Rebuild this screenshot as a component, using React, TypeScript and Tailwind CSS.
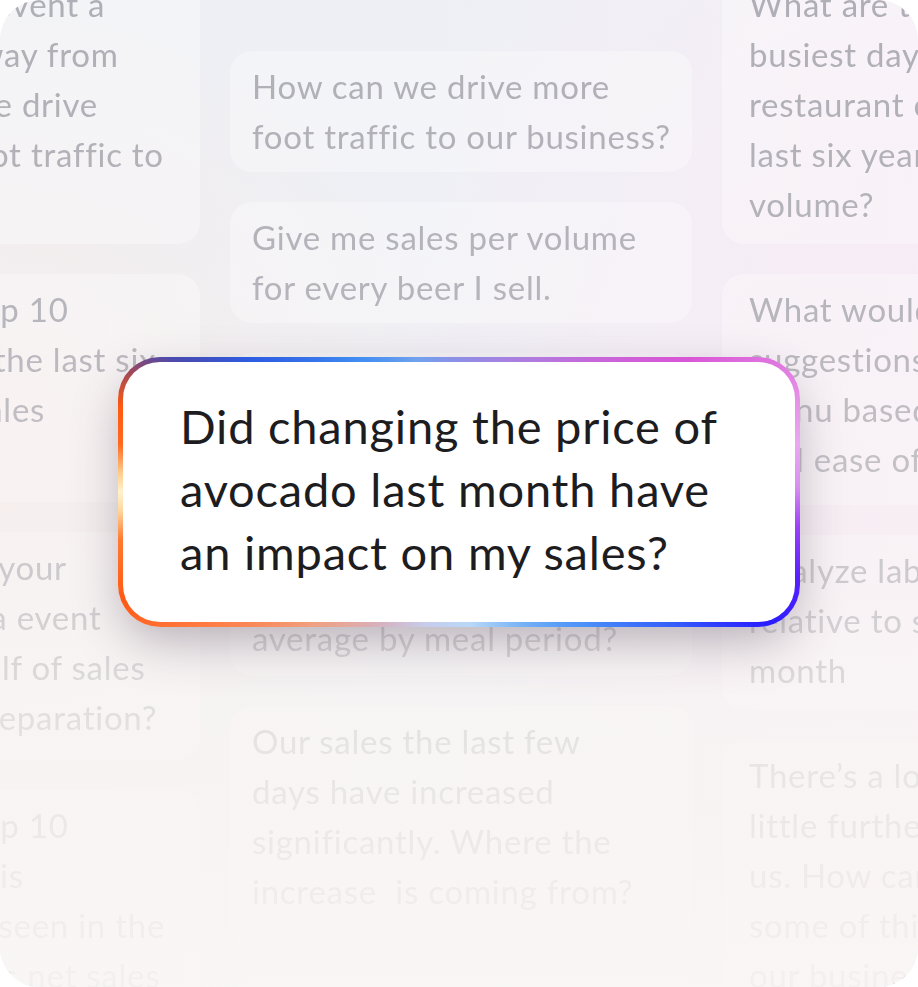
import React from 'react';

type Card = { lines: string[]; h: string };
type Column = { mt: string; pad: string; cards: Card[] };

// background prompt cards, three columns that run past the frame on both sides
const columns: Column[] = [
  {
    mt: 'mt-[-31px]',
    pad: 'px-[22px]',
    cards: [
      {
        h: 'h-[275px]',
        lines: ['If there is a big event a', 'couple block away from', 'us how could we drive', 'even greater foot traffic to', 'us?'],
      },
      {
        h: 'h-[228px]',
        lines: ['What are the top 10', 'selling items in the last six', 'month by net sales', 'volume?'],
      },
      {
        h: 'h-[228px]',
        lines: ['How can I prep your', 'staff ahead for a event', 'keep labor at half of sales', 'while in their preparation?'],
      },
      {
        h: 'h-[260px]',
        lines: ['What are the top 10', 'items and what is', 'the growth I’ve seen in the', 'previous month’s net sales'],
      },
    ],
  },
  {
    mt: 'mt-[51px]',
    pad: 'px-[22px]',
    cards: [
      { h: 'h-[121px]', lines: ['How can we drive more', 'foot traffic to our business?'] },
      { h: 'h-[121px]', lines: ['Give me sales per volume', 'for every beer I sell.'] },
      {
        h: 'h-[323px]',
        lines: [
          'What is my average check',
          'size by server and by',
          'day of the week? Also',
          'how does it compare to',
          'last year’s weekly',
          'average by meal period?',
        ],
      },
      {
        h: 'h-[240px]',
        lines: ['Our sales the last few', 'days have increased', 'significantly. Where the', 'increase  is coming from?'],
      },
      { h: 'h-[200px]', lines: ['Which menu items are', 'driving repeat visits?'] },
    ],
  },
  {
    mt: 'mt-[-31px]',
    pad: 'pl-[27px] pr-[22px]',
    cards: [
      {
        h: 'h-[275px]',
        lines: ['What are the', 'busiest days for my', 'restaurant over the', 'last six years by', 'volume?'],
      },
      {
        h: 'h-[231px]',
        lines: ['What would be your', 'suggestions for my', 'menu based on cost', 'and ease of prep?'],
      },
      { h: 'h-[175px]', lines: ['Analyze labor costs', 'relative to sales this', 'month'] },
      {
        h: 'h-[280px]',
        lines: [
          'There’s a lot going on a',
          'little further away from',
          'us. How can we capture',
          'some of this traffic for',
          'our business?',
        ],
      },
    ],
  },
];

const PromptCard = ({ card, pad }: { card: Card; pad: string }) => (
  <div className={`overflow-hidden rounded-[22px] bg-white/35 pt-[10px] ${pad} ${card.h}`}>
    {card.lines.map((line, i) => (
      <div key={i} className="whitespace-pre">
        {line}
      </div>
    ))}
  </div>
);

export default function App() {
  return (
    <div className="h-[987px] w-[918px] bg-white font-[Lato,sans-serif]">
      <div className="relative h-[987px] w-[918px] overflow-hidden rounded-[40px] bg-[radial-gradient(circle_at_0%_45%,rgba(246,236,234,0.9)_0%,rgba(246,236,234,0)_45%),radial-gradient(circle_at_100%_40%,rgba(246,234,246,0.9)_0%,rgba(246,234,246,0)_50%),linear-gradient(90deg,#eceef4_0%,#edeff5_45%,#f5eef6_100%)]">
        {/* card grid */}
        <div className="ml-[-262px] grid w-[1446px] grid-cols-[462px_462px_462px] items-start gap-x-[30px] text-[33px] leading-[50px] tracking-[0.75px] text-[#abaab2] blur-[0.4px]">
          {columns.map((col, ci) => (
            <div key={ci} className={`flex flex-col gap-[30px] ${col.mt}`}>
              {col.cards.map((card, i) => (
                <PromptCard key={i} card={card} pad={col.pad} />
              ))}
            </div>
          ))}
        </div>

        {/* fade toward the bottom */}
        <div className="pointer-events-none absolute inset-0 bg-[linear-gradient(180deg,rgba(249,245,244,0.06)_0%,rgba(249,245,244,0.14)_30%,rgba(248,243,241,0.46)_60%,rgba(249,245,243,0.77)_76%,rgba(249,245,243,0.88)_90%,rgba(249,246,244,0.92)_100%)]" />

        {/* featured prompt */}
        <div className="absolute left-[118px] top-[357px] w-[682px] rounded-[42px] bg-[conic-gradient(from_0deg_at_50%_50%,#8f8ee6_0deg,#b27ade_30deg,#d956d6_60deg,#e58fe6_74deg,#e9a8ef_82deg,#d890f0_89deg,#9a40f8_96deg,#5a20ff_104deg,#2a1dff_113deg,#3560fa_122deg,#4a90f8_136deg,#6aaaf6_150deg,#b8d8f8_175deg,#c8cbea_195deg,#d8b0bc_212deg,#f0a080_228deg,#ff7a40_243deg,#ff5814_252deg,#ff7a30_262deg,#ffd9a0_267deg,#fff2cc_270deg,#ffd090_273deg,#ff6a20_278deg,#ff5a10_284deg,#a04858_290deg,#4a4ab0_295deg,#2d5ce2_302deg,#3f8cf2_322deg,#6fa2ee_342deg,#8f8ee6_360deg)] p-[5px] shadow-[0_18px_50px_-6px_rgba(70,55,75,0.38)]">
          <div className="rounded-[37px] bg-white px-[57px] pb-[38px] pt-[33px] text-[47px] leading-[63px] tracking-[0.8px] text-[#1d1d1f]">
            <div>Did changing the price of</div>
            <div>avocado last month have</div>
            <div>an impact on my sales?</div>
          </div>
        </div>
      </div>
    </div>
  );
}
